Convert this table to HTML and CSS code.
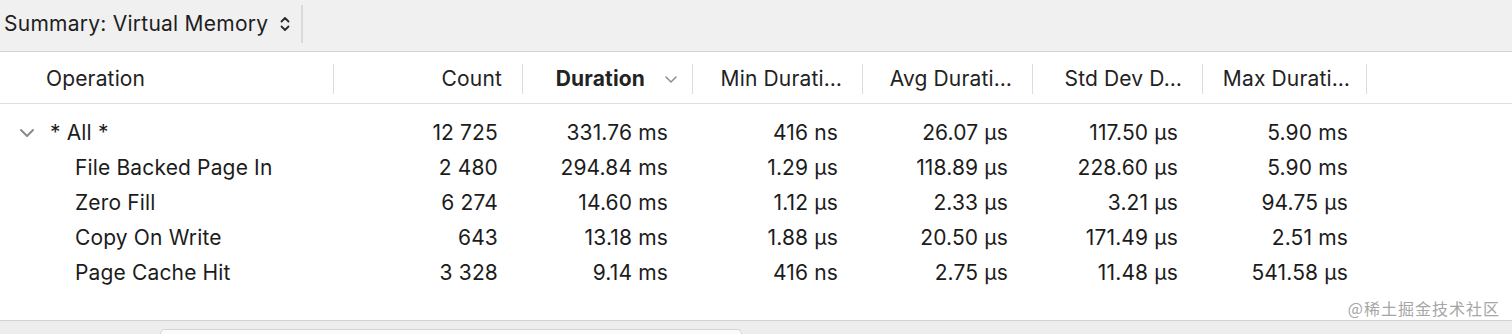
FILE: index.html
```html
<!DOCTYPE html>
<html>
<head>
<meta charset="utf-8">
<link rel="stylesheet" href="styles.css">
</head>
<body>
<div class="app">
  <div class="toolbar">
    <div class="selector">
      <span class="sel-label">Summary: Virtual Memory</span>
      <svg class="updown" width="12" height="18" viewBox="0 0 12 18"><path d="M2.5 6.5 L6 3 L9.5 6.5 M2.5 11.5 L6 15 L9.5 11.5" fill="none" stroke="#2a2a2a" stroke-width="1.8" stroke-linecap="round" stroke-linejoin="round"/></svg>
    </div>
  </div>
  <div class="table">
    <div class="thead">
      <div class="th th-op">Operation</div>
      <div class="th num">Count</div>
      <div class="th num sorted"><span class="bold">Duration</span><svg class="sortchev" width="14" height="10" viewBox="0 0 14 10"><path d="M2 3 L7 8 L12 3" fill="none" stroke="#8e8e8e" stroke-width="1.5" stroke-linecap="round" stroke-linejoin="round"/></svg></div>
      <div class="th num">Min Durati…</div>
      <div class="th num">Avg Durati…</div>
      <div class="th num">Std Dev D…</div>
      <div class="th num last">Max Durati…</div>
      <div class="th-rest"></div>
    </div>
    <div class="tbody">
      <div class="tr">
        <div class="td op root"><svg class="disc" width="16" height="10" viewBox="0 0 16 10"><path d="M2 2 L8 8 L14 2" fill="none" stroke="#8a8a8a" stroke-width="2" stroke-linecap="round" stroke-linejoin="round"/></svg><span>* All *</span></div>
        <div class="td n">12 725</div><div class="td n">331.76 ms</div><div class="td n">416 ns</div><div class="td n">26.07 µs</div><div class="td n">117.50 µs</div><div class="td n last">5.90 ms</div><div class="td"></div>
      </div>
      <div class="tr">
        <div class="td op child">File Backed Page In</div>
        <div class="td n">2 480</div><div class="td n">294.84 ms</div><div class="td n">1.29 µs</div><div class="td n">118.89 µs</div><div class="td n">228.60 µs</div><div class="td n last">5.90 ms</div><div class="td"></div>
      </div>
      <div class="tr">
        <div class="td op child">Zero Fill</div>
        <div class="td n">6 274</div><div class="td n">14.60 ms</div><div class="td n">1.12 µs</div><div class="td n">2.33 µs</div><div class="td n">3.21 µs</div><div class="td n last">94.75 µs</div><div class="td"></div>
      </div>
      <div class="tr">
        <div class="td op child">Copy On Write</div>
        <div class="td n">643</div><div class="td n">13.18 ms</div><div class="td n">1.88 µs</div><div class="td n">20.50 µs</div><div class="td n">171.49 µs</div><div class="td n last">2.51 ms</div><div class="td"></div>
      </div>
      <div class="tr">
        <div class="td op child">Page Cache Hit</div>
        <div class="td n">3 328</div><div class="td n">9.14 ms</div><div class="td n">416 ns</div><div class="td n">2.75 µs</div><div class="td n">11.48 µs</div><div class="td n last">541.58 µs</div><div class="td"></div>
      </div>
    </div>
    <div class="watermark-row"><span class="watermark">@稀土掘金技术社区</span></div>
  </div>
  <div class="bottombar">
    <div class="bb-left"></div>
    <div class="bb-field"></div>
  </div>
</div>
</body>
</html>
```
FILE: styles.css
```css
html, body {
  margin: 0;
  padding: 0;
  background: #ffffff;
}
body {
  font-family: Inter, "Noto Sans", "Noto Sans CJK SC", sans-serif;
  font-size: 21px;
  letter-spacing: 0.15px;
  color: #1c1c1c;
  width: 1512px;
  height: 334px;
  overflow: hidden;
}
.app {
  display: flex;
  flex-direction: column;
  height: 334px;
}
.toolbar {
  height: 51px;
  background: #f0f0f0;
  border-bottom: 1px solid #d4d4d4;
  display: flex;
  align-items: center;
  flex: none;
}
.selector {
  display: flex;
  align-items: center;
  height: 38px;
  padding-left: 4px;
  padding-right: 10px;
  border-right: 2px solid #dadada;
  margin-top: -4px;
}
.sel-label {
  color: #1e1e1e;
  letter-spacing: 0.25px;
}
.updown {
  margin-left: 11px;
}
.table {
  flex: 1;
  display: flex;
  flex-direction: column;
  background: #fff;
}
.thead {
  display: grid;
  grid-template-columns: 334px 189px 170px 170px 170px 170px 164px 1fr;
  height: 52px;
  align-items: center;
  border-bottom: 1px solid #dedede;
  box-sizing: border-box;
  flex: none;
}
.th {
  height: 30px;
  line-height: 30px;
  border-right: 1px solid #dcdcdc;
  white-space: nowrap;
  color: #222;
  box-sizing: border-box;
  margin-top: 2px;
}
.th-op {
  padding-left: 46px;
}
.th.num {
  text-align: right;
  padding-right: 20px;
}
.th.num.last {
  padding-right: 16px;
}
.th.sorted {
  padding-right: 14px;
  display: flex;
  align-items: center;
  justify-content: flex-end;
}
.bold {
  font-weight: 650;
}
.sortchev {
  margin-left: 19px;
  margin-top: 1px;
}
.tbody {
  padding-top: 11px;
  display: flex;
  flex-direction: column;
}
.tr {
  display: grid;
  grid-template-columns: 334px 189px 170px 170px 170px 170px 164px 1fr;
  height: 35px;
  align-items: center;
}
.td {
  white-space: nowrap;
}
.td.n {
  text-align: right;
  padding-right: 25px;
}
.td.n.last {
  padding-right: 19px;
}
.op.root {
  display: flex;
  align-items: center;
  padding-left: 19px;
}
.disc {
  margin-right: 15px;
  margin-top: 1px;
}
.op.child {
  padding-left: 75px;
}
.watermark-row {
  flex: 1;
  display: flex;
  justify-content: flex-end;
  align-items: flex-end;
  padding-right: 12px;
  padding-bottom: 0;
}
.watermark {
  font-family: "Noto Sans CJK SC", sans-serif;
  font-size: 16px;
  color: #a6a6a6;
  letter-spacing: 1px;
}
.bottombar {
  height: 13px;
  flex: none;
  background: #ededed;
  border-top: 1px solid #d2d2d2;
  display: flex;
  align-items: flex-end;
}
.bb-left {
  width: 160px;
}
.bb-field {
  width: 580px;
  height: 4px;
  background: #fafafa;
  border: 1px solid #d6d6d6;
  border-bottom: none;
  border-radius: 5px 5px 0 0;
}
```
